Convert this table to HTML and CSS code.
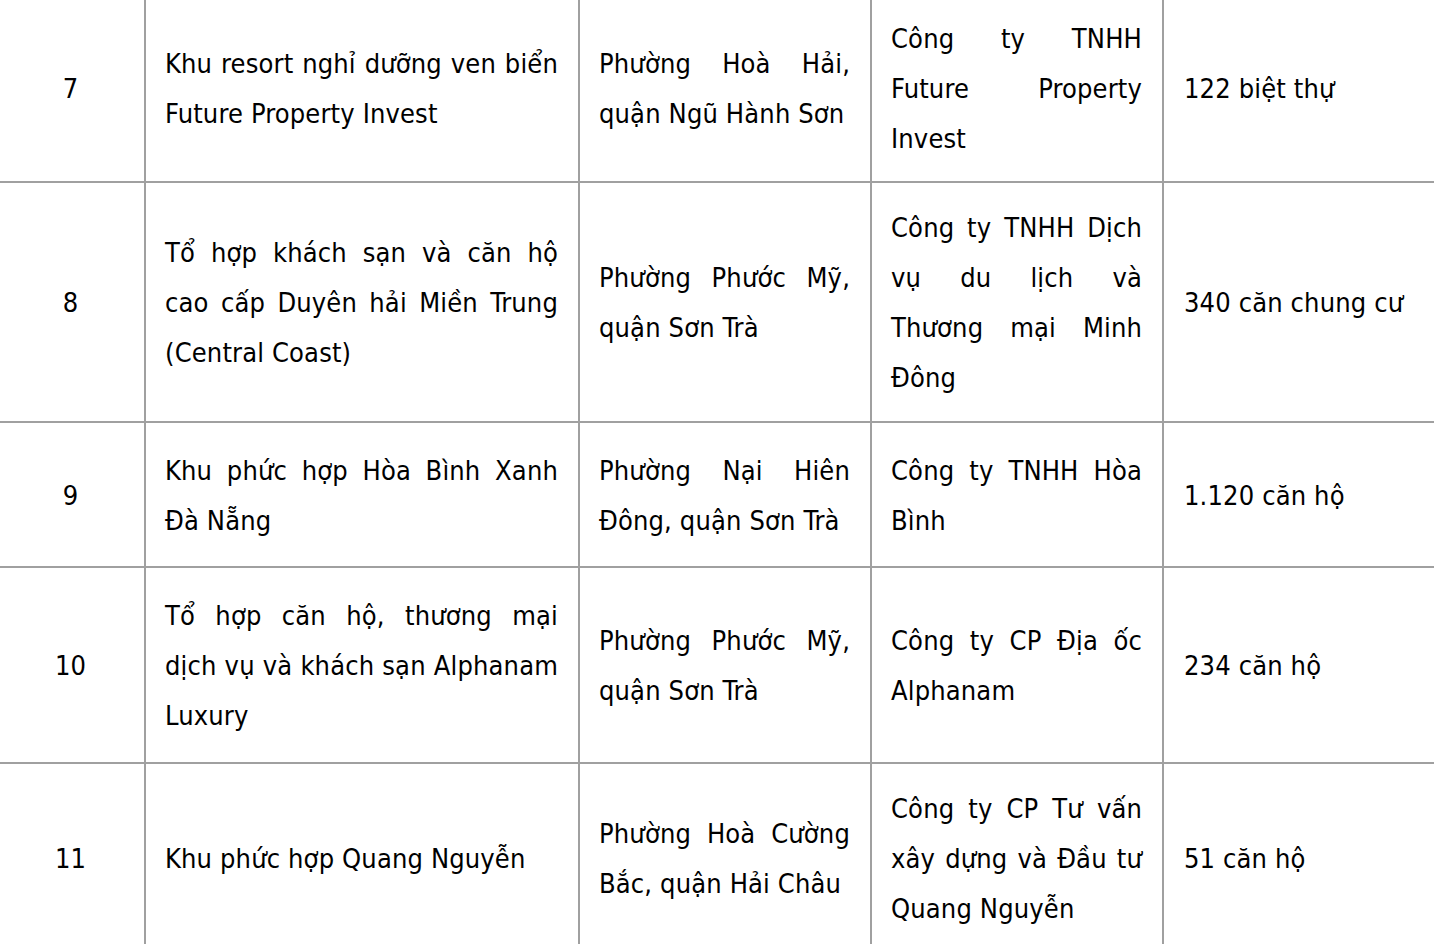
FILE: index.html
```html
<!DOCTYPE html>
<html lang="vi">
<head>
<meta charset="utf-8">
<title>Danh sách dự án</title>
<link rel="stylesheet" href="styles.css">
</head>
<body>
<table class="grid">
  <colgroup>
    <col class="c-no">
    <col class="c-name">
    <col class="c-loc">
    <col class="c-inv">
    <col class="c-size">
  </colgroup>
  <tbody>
    <tr class="row-a">
      <td class="no">7</td>
      <td class="txt"><span class="ln">Khu resort nghỉ dưỡng ven biển</span><span class="ln last">Future Property Invest</span></td>
      <td class="txt"><span class="ln">Phường Hoà Hải,</span><span class="ln last">quận Ngũ Hành Sơn</span></td>
      <td class="txt"><span class="ln">Công ty TNHH</span><span class="ln">Future Property</span><span class="ln last">Invest</span></td>
      <td class="size">122 biệt thự</td>
    </tr>
    <tr class="row-b">
      <td class="no">8</td>
      <td class="txt"><span class="ln">Tổ hợp khách sạn và căn hộ</span><span class="ln">cao cấp Duyên hải Miền Trung</span><span class="ln last">(Central Coast)</span></td>
      <td class="txt"><span class="ln">Phường Phước Mỹ,</span><span class="ln last">quận Sơn Trà</span></td>
      <td class="txt"><span class="ln">Công ty TNHH Dịch</span><span class="ln">vụ du lịch và</span><span class="ln">Thương mại Minh</span><span class="ln last">Đông</span></td>
      <td class="size">340 căn chung cư</td>
    </tr>
    <tr class="row-c">
      <td class="no">9</td>
      <td class="txt"><span class="ln">Khu phức hợp Hòa Bình Xanh</span><span class="ln last">Đà Nẵng</span></td>
      <td class="txt"><span class="ln">Phường Nại Hiên</span><span class="ln last">Đông, quận Sơn Trà</span></td>
      <td class="txt"><span class="ln">Công ty TNHH Hòa</span><span class="ln last">Bình</span></td>
      <td class="size">1.120 căn hộ</td>
    </tr>
    <tr class="row-d">
      <td class="no">10</td>
      <td class="txt"><span class="ln">Tổ hợp căn hộ, thương mại</span><span class="ln">dịch vụ và khách sạn Alphanam</span><span class="ln last">Luxury</span></td>
      <td class="txt"><span class="ln">Phường Phước Mỹ,</span><span class="ln last">quận Sơn Trà</span></td>
      <td class="txt"><span class="ln">Công ty CP Địa ốc</span><span class="ln last">Alphanam</span></td>
      <td class="size">234 căn hộ</td>
    </tr>
    <tr class="row-e">
      <td class="no">11</td>
      <td class="txt"><span class="ln last">Khu phức hợp Quang Nguyễn</span></td>
      <td class="txt"><span class="ln">Phường Hoà Cường</span><span class="ln last">Bắc, quận Hải Châu</span></td>
      <td class="txt"><span class="ln">Công ty CP Tư vấn</span><span class="ln">xây dựng và Đầu tư</span><span class="ln last">Quang Nguyễn</span></td>
      <td class="size">51 căn hộ</td>
    </tr>
  </tbody>
</table>
</body>
</html>
```

FILE: styles.css
```css
html, body {
  margin: 0;
  padding: 0;
  background: #ffffff;
}

body {
  font-family: "DejaVu Sans Condensed", "DejaVu Sans", sans-serif;
  font-stretch: condensed;
  font-size: 27px;
  line-height: 50px;
  letter-spacing: 0.15px;
  color: #000000;
  overflow: hidden;
}

.grid {
  border-collapse: collapse;
  table-layout: fixed;
  width: 1462px;
  margin: -7px 0 0 -8px;
}

.c-no { width: 152px; }
.c-name { width: 434px; }
.c-loc { width: 292px; }
.c-inv { width: 292px; }
.c-size { width: 292px; }

.grid td {
  border: 2px solid #a0a0a0;
  padding: 2px 20px 0 19px;
  vertical-align: middle;
}

.grid td.no {
  text-align: center;
  padding: 2px 0 0 3px;
}

.txt {
  text-align: justify;
}

.ln {
  display: block;
  white-space: nowrap;
  text-align: justify;
  text-align-last: justify;
}

.ln.last {
  text-align-last: left;
}

.grid td.size {
  text-align: left;
  padding-left: 20px;
}

.row-a { height: 188px; }
.row-b { height: 240px; }
.row-c { height: 145px; }
.row-d { height: 196px; }
.row-e { height: 190px; }
```
